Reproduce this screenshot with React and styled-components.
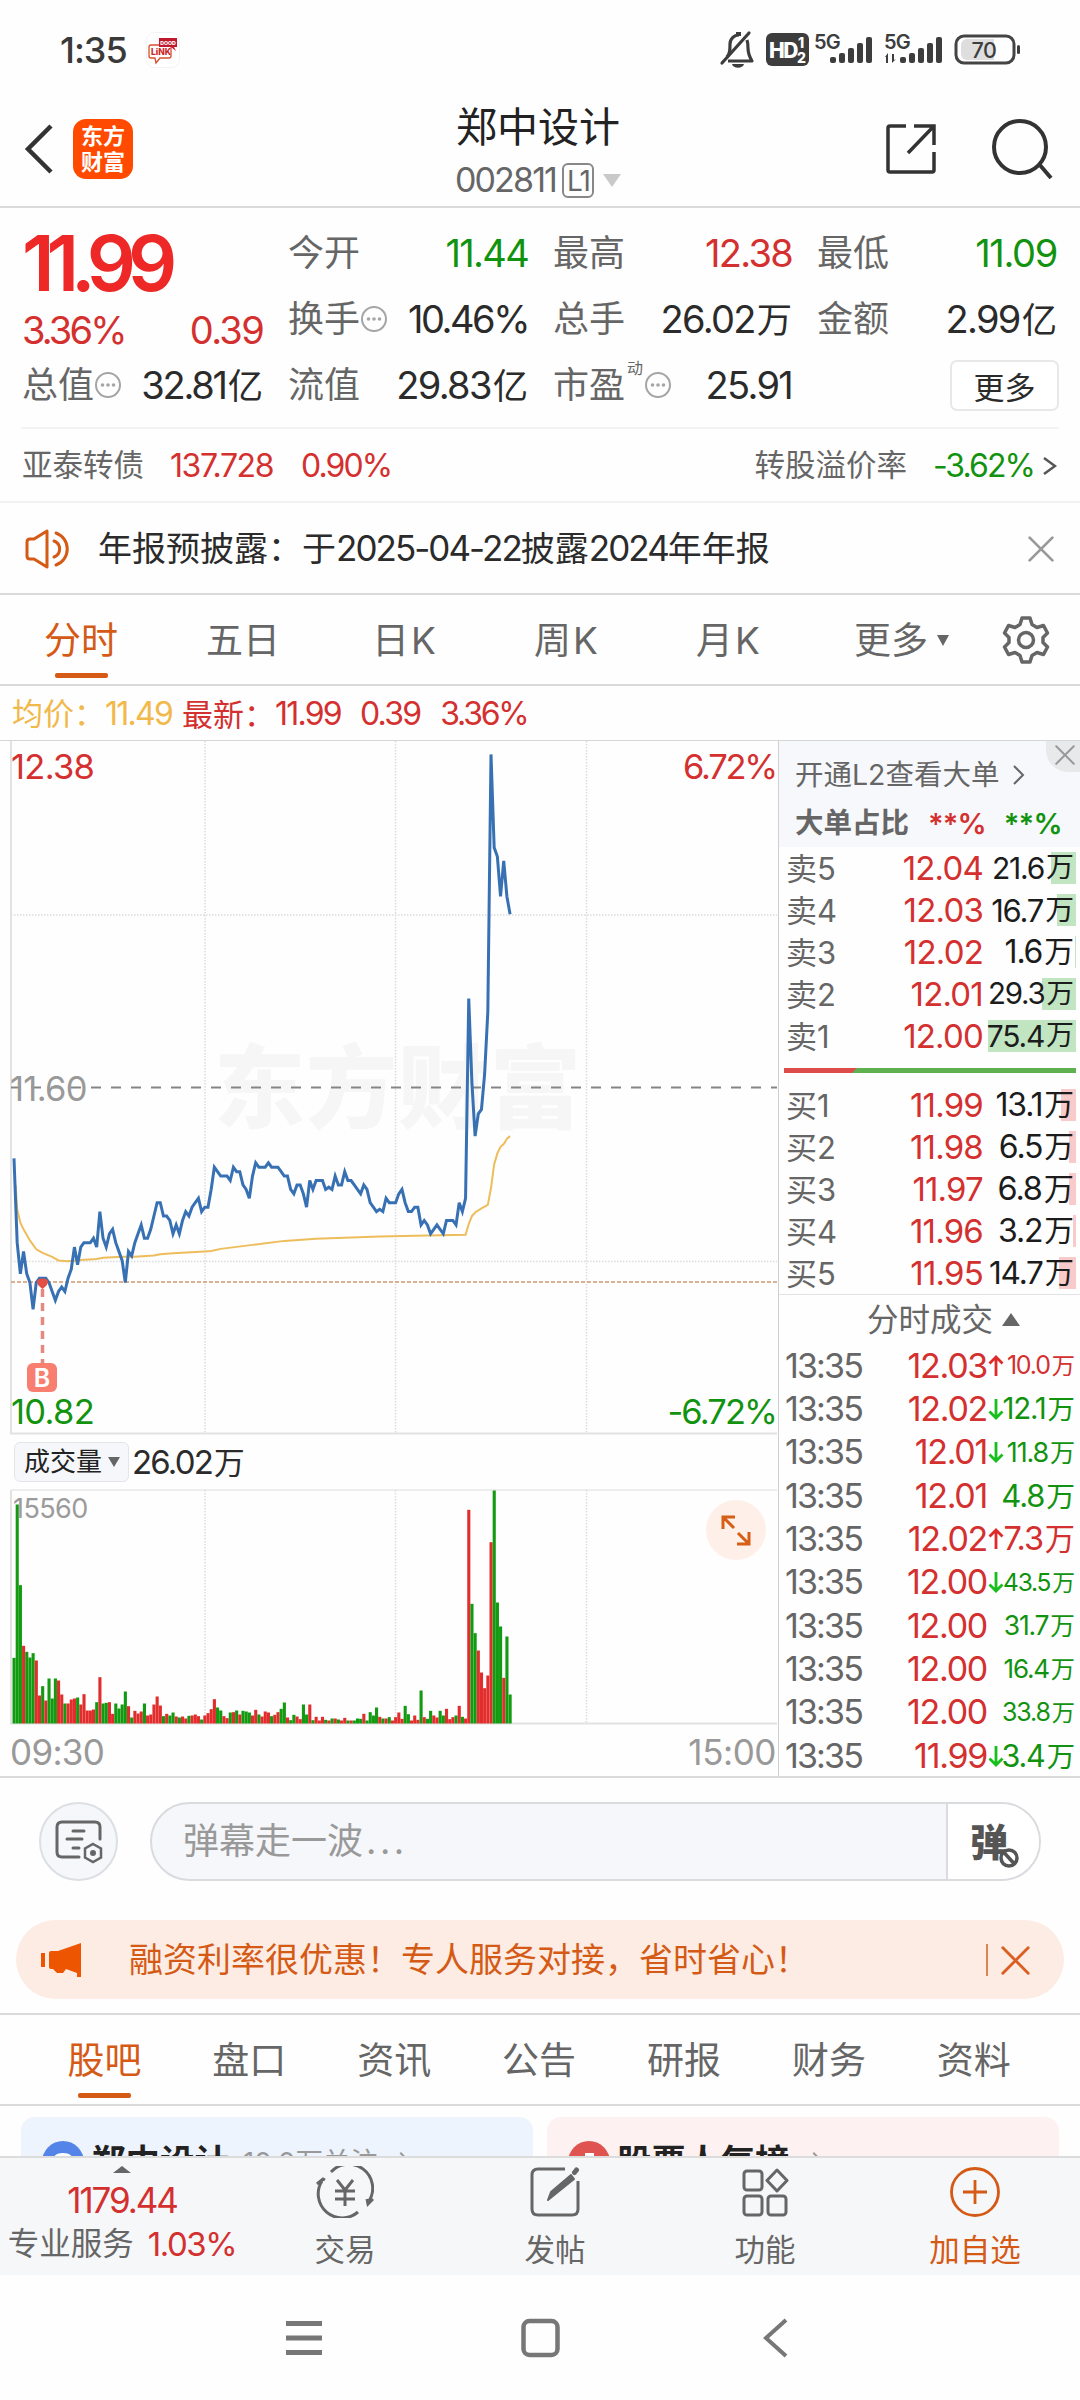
import React from 'react';
import styled, { createGlobalStyle } from 'styled-components';

const RED = '#d3302f';
const GREEN = '#12930f';
const ORANGE = '#d45a15';

const GlobalStyle = createGlobalStyle`
  * { box-sizing: border-box; }
  body {
    margin: 0;
    background: #fff;
  }
`

const Screen = styled.div`
  width: 1080px;
  height: 2400px;
  overflow: hidden;
  display: flex;
  flex-direction: column;
  background: #fefefe;
  color: #666;
  font-family: Inter, 'Noto Sans CJK SC', sans-serif;
  font-size: 36px;
  line-height: 1;
  white-space: nowrap;

  svg { display: block; flex: none; }
`

const Num = styled.span`
  color: ${p => p.$color || '#2b2b2b'};
  font-size: ${p => p.$size || 38}px;
  letter-spacing: ${p => p.$ls || -0.045}em;
  margin-left: ${p => p.$ml || 0}px;
`

const Wan = styled.span`
  font-size: 0.93em;
  letter-spacing: 0;
  margin-left: 2px;
`

/* ---------- status bar ---------- */

const StatusBar = styled.div`
  height: 100px;
  display: flex;
  align-items: center;
  padding: 0 58px 0 60px;
  color: #3a3a3a;
`

const Clock = styled.span`
  width: 86px;
  font-size: 36px;
  font-weight: 500;
  letter-spacing: -1px;
`

const StatusIcons = styled.div`
  margin-left: auto;
`

/* ---------- title bar ---------- */

const TitleBar = styled.div`
  height: 108px;
  display: flex;
  align-items: center;
  justify-content: space-between;
  border-bottom: 2px solid #dadada;
  padding: 0 27px 10px 23px;
`

const TitleSide = styled.div`
  display: flex;
  align-items: center;
  justify-content: ${p => p.$end ? 'flex-end' : 'flex-start'};
  width: 300px;
  gap: ${p => p.$end ? 54 : 20}px;
  padding-top: 2px;
`

const Logo = styled.div`
  width: 60px;
  height: 60px;
  border-radius: 13px;
  background: #ff4a00;
  color: #fff;
  font-size: 22px;
  font-weight: 700;
  line-height: 26px;
  text-align: center;
  padding-top: 4px;
`

const TitleText = styled.div`
  display: flex;
  flex-direction: column;
  align-items: center;
  gap: 12px;
  padding: 6px 0 0 0;
`

const StockName = styled.div`
  font-size: 41px;
  color: #222;
  height: 46px;
  line-height: 46px;
`

const StockCode = styled.div`
  display: flex;
  align-items: center;
  height: 36px;
`

const Level = styled.span`
  width: 32px;
  height: 35px;
  border: 2px solid #888;
  border-radius: 6px;
  margin: 0 9px 0 6px;
  font-size: 28px;
  line-height: 32px;
  letter-spacing: -2px;
  text-align: center;
`

const Triangle = styled.i`
  border: ${p => p.$w / 2}px solid transparent;
  border-${p => p.$up ? 'bottom' : 'top'}: ${p => p.$h}px solid ${p => p.$color || '#666'};
  border-${p => p.$up ? 'top' : 'bottom'}: 0;
`

/* ---------- quote ---------- */

const Quote = styled.div`
  height: 221px;
  margin: 0 21px;
  padding: 12px 2px 0 1px;
  display: grid;
  grid-template-columns: 241px 240px 239px 240px;
  column-gap: 25px;
  border-bottom: 2px solid #f3f3f3;
`

const QuoteCol = styled.div`
  display: grid;
  grid-template-rows: ${p => p.$rows || '66px 66px 66px'};
`

const Cell = styled.div`
  display: flex;
  align-items: center;
  justify-content: space-between;
`

const Label = styled.span`
  display: flex;
  align-items: center;
`

const BigPrice = styled.span`
  font-size: 77px;
  font-weight: 600;
  letter-spacing: -8px;
  color: #ee2827;
`

const Sup = styled.sup`
  align-self: flex-start;
  font-size: 16px;
  margin: -7px 1px 0 2px;
`

const MoreButton = styled.button`
  width: 109px;
  height: 51px;
  margin: 0 -2px 0 auto;
  border: 2px solid #e8e8e8;
  border-radius: 7px;
  background: #fff;
  padding: 0;
  color: #2b2b2b;
  font: 31px 'Noto Sans CJK SC', sans-serif;
  line-height: 41px;
`

const BondRow = styled.div`
  height: 74px;
  padding: 1px 23px 0 22px;
  display: flex;
  align-items: center;
  border-bottom: 2px solid #f1f1f1;
  font-size: 30.5px;
`

const Push = styled.span`
  margin-left: auto;
`

const Notice = styled.div`
  height: 92px;
  display: flex;
  align-items: center;
  padding: 1px 26px 0 25px;
  border-bottom: 2px solid #dadada;
  color: #2b2b2b;
  font-size: 34px;
`

const NoticeText = styled.span`
  flex: 1;
  margin-left: 27px;
`

/* ---------- tabs ---------- */

const Tabs = styled.div`
  height: ${p => p.$height}px;
  display: flex;
  padding-left: ${p => p.$pad || 0}px;
  border-bottom: 2px solid #dadada;
`

const Tab = styled.div`
  position: relative;
  width: ${p => p.$width}px;
  padding-top: 2px;
  display: flex;
  justify-content: center;
  align-items: center;
  font-size: 37px;
  letter-spacing: ${p => p.$ls || 0}px;
  color: ${p => p.$active ? ORANGE : '#666'};

  ${p => p.$active && `&::after {
    content: '';
    position: absolute;
    bottom: 6px;
    width: 53px;
    height: 5px;
    border-radius: 2px;
    background: ${ORANGE};
  }`}
`

const TabCaret = styled.span`
  position: absolute;
  right: 23px;
  display: flex;
`

const TabGear = styled.div`
  flex: 1;
  display: flex;
  align-items: center;
  justify-content: center;
`

const Legend = styled.div`
  height: 54px;
  display: flex;
  align-items: center;
  padding: 2px 0 0 12px;
  font-size: 31px;
  color: ${RED};
`

const Avg = styled.span`
  color: #f0b94a;
  width: 170px;
`

/* ---------- charts and order book ---------- */

const Market = styled.div`
  height: 1038px;
  display: flex;
  border-top: 1px solid #d6d6d6;
  border-bottom: 2px solid #dadada;
`

const Charts = styled.div`
  width: 778px;
`

const VolumeBar = styled.div`
  height: 54px;
  display: flex;
  align-items: center;
  padding-left: 14px;
`

const Indicator = styled.div`
  width: 115px;
  height: 40px;
  display: flex;
  align-items: center;
  justify-content: space-between;
  border: 1px solid #e3e5e8;
  border-radius: 6px;
  background: #f6f7fa;
  padding: 0 8px 0 9px;
  margin-right: 3px;
  color: #222;
  font-size: 26px;
`

const Times = styled.div`
  height: 53px;
  display: flex;
  align-items: center;
  justify-content: space-between;
  padding: 1px 2px 0 10px;
`

const Book = styled.div`
  width: 302px;
  border-left: 1px solid #cfcfcf;
`

const BookHead = styled.div`
  position: relative;
  height: 106px;
  background: #f7f8fb;
  padding: 13px 0 0 16px;
  font-size: 28.5px;
`

const BookLine = styled.div`
  height: 42px;
  margin-bottom: 6px;
  display: flex;
  align-items: center;
  font-weight: ${p => p.$bold ? 600 : 400};
`

const CloseCorner = styled.div`
  position: absolute;
  top: 0;
  right: 0;
  width: 34px;
  height: 31px;
  border-bottom-left-radius: 22px;
  background: #e8e9ea;
  display: flex;
  align-items: center;
  justify-content: center;
  padding: 0 0 3px 3px;
`

const Levels = styled.div`
  padding: 0 4px 0 7px;
`

const LevelRow = styled.div`
  height: 42px;
  display: flex;
  align-items: center;
  font-size: 31px;
`

const LevelPrice = styled.span`
  flex: 1;
  text-align: right;
  font-size: 33px;
  letter-spacing: -0.8px;
  color: ${RED};
`

const LevelAmount = styled.span`
  width: 88px;
  height: 32px;
  margin-left: 5px;
  padding-right: 2px;
  display: flex;
  align-items: center;
  justify-content: flex-end;
  font-size: ${p => p.$size}px;
  letter-spacing: -1.2px;
  color: #1c1c1c;
  background: linear-gradient(${p => p.$color}, ${p => p.$color}) right / ${p => p.$fill}px 100% no-repeat;
`

const Ratio = styled.div`
  height: 5px;
  margin: 11px 4px 11px 5px;
  background: linear-gradient(135deg, #dc4c4b 51px, #5fb14f 52px);
`

const TradeTitle = styled.div`
  height: 50px;
  border-top: 1px solid #e3e3e3;
  display: flex;
  align-items: center;
  justify-content: center;
  gap: 9px;
  padding-left: 28px;
  font-size: 31.5px;
`

const TradeRow = styled.div`
  height: 43.35px;
  display: flex;
  align-items: center;
  padding: 0 5px 0 6px;
`

const TradePrice = styled.span`
  flex: 1;
  text-align: right;
  font-size: 34px;
  letter-spacing: -1.3px;
  color: ${RED};
`

const TradeArrow = styled.span`
  width: 18px;
  display: flex;
  justify-content: center;
  margin-right: 1px;
`

const TradeAmount = styled.span`
  width: 69px;
  display: flex;
  justify-content: flex-end;
  align-items: baseline;
  font-size: ${p => p.$size}px;
  letter-spacing: -1.2px;
  color: ${p => p.$up ? RED : GREEN};
`

/* ---------- comment bar and banner ---------- */

const Comment = styled.div`
  display: flex;
  align-items: center;
  padding: 24px 39px 0 39px;
  gap: 32px;
`

const RoundButton = styled.div`
  width: 79px;
  height: 79px;
  border: 2px solid #dcdfe3;
  border-radius: 50%;
  background: #f6f7fa;
  display: flex;
  align-items: center;
  justify-content: center;
`

const CommentBox = styled.div`
  flex: 1;
  height: 79px;
  display: flex;
  border: 2px solid #d9dbdf;
  border-radius: 40px;
  overflow: hidden;
  background: #f6f7fa;
`

const Placeholder = styled.div`
  flex: 1;
  padding-left: 31px;
  line-height: 75px;
  color: #999;
`

const Ellipsis = styled.span`
  letter-spacing: 3.5px;
  margin-left: 3px;
`

const DanmuToggle = styled.div`
  width: 93px;
  border-left: 2px solid #d9dbdf;
  background: #fff;
  display: flex;
  align-items: center;
  padding-left: 22px;
  color: #555;
  font-size: 38px;
  font-weight: 800;

  svg { margin: 32px 0 0 -9px; }
`

const Banner = styled.div`
  height: 79px;
  margin: 39px 16px 14px;
  padding: 1px 34px 0 25px;
  border-radius: 40px;
  background: #fcece3;
  display: flex;
  align-items: center;
  color: ${ORANGE};
  font-size: 34px;
`

const BannerText = styled.span`
  flex: 1;
  margin-left: 46px;
`

const BannerRule = styled.i`
  width: 2px;
  height: 32px;
  margin-right: 13px;
  background: #dc8455;
`

/* ---------- cards ---------- */

const Divider = styled.div`
  height: 2px;
  background: #dadada;
`

const Cards = styled.div`
  height: 50px;
  overflow: hidden;
  display: grid;
  grid-template-columns: 512px 512px;
  gap: 14px;
  padding: 11px 21px 0;
`

const Card = styled.div`
  height: 120px;
  border-radius: 14px 14px 0 0;
  background: ${p => p.$bg};
  display: flex;
  align-items: flex-start;
  padding: 24px 21px;
`

const CardTitle = styled.span`
  margin: 4px 14px 0 7px;
  font-size: 34.5px;
  font-weight: 700;
  color: #222;
`

const CardNote = styled.span`
  margin: 8px 16px 0 0;
  font-size: 27.5px;
  color: #999;
`

const Chevron = styled.i`
  width: 14px;
  height: 14px;
  margin: 14px 0 0 ${p => p.$ml || 0}px;
  border: solid #999;
  border-width: 2px 2px 0 0;
  transform: rotate(45deg);
`

/* ---------- bottom bar ---------- */

const BottomBar = styled.div`
  height: 119px;
  display: flex;
  background: #f6f7f9;
  border-top: 2px solid #dcdcdc;
`

const IndexTicker = styled.div`
  width: 240px;
  display: flex;
  flex-direction: column;
  align-items: center;
  padding: 8px 0 0 4px;
  font-size: 31.5px;
`

const TickerLine = styled.div`
  height: ${p => p.$height}px;
  display: flex;
  align-items: center;
`

const Action = styled.div`
  width: 210px;
  display: flex;
  flex-direction: column;
  align-items: center;
  padding-top: 8px;
  gap: 17px;
  font-size: 30.5px;
  color: ${p => p.$color || '#666'};
`

const SystemNav = styled.div`
  flex: 1;
  display: flex;
  justify-content: center;
  padding: 41px 3px 0 0;
`

/* ---------- data ---------- */

// minute prices, in cents from yesterday's close of 11.60
const PRICES = [
  -16, -35, -42, -37, -42, -44, -50, -44, -43, -43, -43, -44, -46, -48, -46, -45, -46, -43, -41, -36,
  -40, -36, -35, -35, -35, -34, -36, -28, -34, -36, -33, -32, -35, -37, -39, -44, -37, -38, -35, -33,
  -31, -34, -34, -32, -29, -26, -26, -29, -29, -30, -33, -31, -33, -30, -28, -29, -27, -26, -25, -28,
  -27, -27, -23, -18, -19, -20, -20, -20, -21, -18, -19, -19, -22, -23, -25, -20, -17, -18, -18, -18,
  -17, -18, -18, -18, -19, -20, -20, -23, -24, -22, -22, -24, -27, -21, -23, -21, -21, -21, -23, -22.5,
  -23, -20, -22, -22, -19, -21, -21, -22, -23, -24, -22, -23, -26, -27, -28, -27.5, -28, -25, -26, -26,
  -26, -24, -23, -26, -28, -28, -27, -27, -31, -30, -31, -33, -32, -31, -32, -33, -30, -30, -30, -31,
  -26, -28, -25, 20, 1, -11, -6, -5, 3, 17, 75, 54, 52, 43, 51, 43, 39,
]

// [minute, cents]
const AVERAGE = [
  [0.5, -22], [1, -27.5], [2, -30.5], [3, -32], [5, -34.5], [7, -36.5], [9, -37.3], [12, -38.2], [14, -39], [17, -39.2],
  [21, -38.9], [26, -38.7], [28, -38.4], [34, -38.2], [38, -38.2], [44, -37.9], [46, -37.6], [50, -37.4],
  [60, -37], [62, -36.9], [65, -36.4], [75, -35.5], [85, -34.6], [95, -34.1], [115, -33.6], [130, -33.4],
  [142, -33.2], [143, -30.8], [144, -29], [145, -28.2], [147, -27.3], [149, -26.5], [150, -22.7],
  [151, -17.3], [152, -14.9], [153, -13.4], [154, -12.8], [155, -11.6], [156, -11],
]

// bar heights, negative for a falling minute
const VOLUMES = [
  -197, -657, -415, 233, -215, -198, -211, 189, 84, -112, 69, -135, -75, -135, 129, 87, -60, 60, 72, 75,
  -78, 57, 88, 39, 39, 42, -64, 139, -60, -62, 64, 29, -60, -45, -57, -96, 52, -18, 38, 30,
  36, -60, 24, 27, 57, 81, 54, -22, 29, -24, -33, 21, -18, 21, 15, -23, 24, 27, 22, -12,
  24, 31, 43, 73, -48, -39, 22, 16, -33, 34, -39, 27, -38, -36, -33, 24, 41, -27, 21, 36,
  33, -22, 26, 34, -44, -63, 18, -10, -26, 21, 13, -57, -27, 57, -10, 20, 9, 20, -11, 9,
  -15, 15, -12, 9, 17, -9, 9, -9, -15, -14, 29, -9, -34, -24, -48, 20, -15, 15, -19, 9,
  19, 33, 14, -53, -28, 9, 24, 11, -99, 19, -14, -38, 24, 18, -38, -24, 44, 13, 19, -24,
  53, -20, 15, 641, -359, -271, 219, 153, 106, 144, 544, -699, -363, -291, 137, -261, -87,
]

// name, price, amount, depth bar width, font size
const SELLS = [
  ['卖5', '12.04', '21.6', 25, 30],
  ['卖4', '12.03', '16.7', 19, 31],
  ['卖3', '12.02', '1.6', 1, 32],
  ['卖2', '12.01', '29.3', 34, 29.5],
  ['卖1', '12.00', '75.4', 88, 30],
]
const BUYS = [
  ['买1', '11.99', '13.1', 15, 32],
  ['买2', '11.98', '6.5', 7, 32],
  ['买3', '11.97', '6.8', 7, 32.5],
  ['买4', '11.96', '3.2', 3, 32],
  ['买5', '11.95', '14.7', 17, 31.5],
]

// price, arrow, amount, font size, bought
const TRADES = [
  ['12.03', 'up', '10.0', 25, true],
  ['12.02', 'down', '12.1', 29.5],
  ['12.01', 'down', '11.8', 27],
  ['12.01', '', '4.8', 31],
  ['12.02', 'up', '7.3', 32.5, true],
  ['12.00', 'down', '43.5', 24.5],
  ['12.00', '', '31.7', 26.5],
  ['12.00', '', '16.4', 26],
  ['12.00', '', '33.8', 25],
  ['11.99', 'down', '3.4', 30.5],
]

const minuteX = i => 14 + i * 3.18;
const priceY = c => 346.3 - c * 4.4387;

/* ---------- icons ---------- */

const Cross = ({ size, color, width = 3 }) => (
  <svg width={size} height={size} viewBox="0 0 24 24" fill="none" stroke={color} strokeWidth={width} strokeLinecap="round">
    <path d="M1.5 1.5l21 21M22.5 1.5l-21 21" />
  </svg>
)

const Dots = () => (
  <svg width="28" height="28" viewBox="0 0 28 28" fill="#a5a5a5">
    <circle cx="14" cy="14" r="12" fill="none" stroke="#a5a5a5" strokeWidth="2" />
    <circle cx="8.5" cy="14" r="1.8" /><circle cx="14" cy="14" r="1.8" /><circle cx="19.5" cy="14" r="1.8" />
  </svg>
)

const Arrow = ({ dir }) => (
  <svg width="16" height="22" viewBox="0 0 16 22" fill="none" stroke={dir === 'up' ? '#e02a2a' : '#17bf1d'} strokeWidth="2.8">
    <path d={dir === 'up' ? 'M8 21V3M1.5 8.5L8 2l6.5 6.5' : 'M8 1v18M1.5 13.5L8 20l6.5-6.5'} />
  </svg>
)

const StatusGlyphs = () => (
  <svg width="304" height="44" viewBox="718 28 304 44" fill="#3d3d3d" fontFamily="Inter, sans-serif">
    <g fill="none" stroke="#3d3d3d" strokeWidth="3.2" strokeLinejoin="round">
      <path d="M727 57c3-4 3-7 3-13 0-5 4-9 9-9M747 40c1 3 1 5 1 8 0 5 1 8 4 13h-24" />
      <path d="M722 63l27-30" strokeLinecap="round" />
    </g>
    <path d="M732 64h12c-1 5-11 5-12 0zM736 32h5v4h-5z" />
    <rect x="766" y="33" width="43" height="33" rx="6" />
    <text x="769" y="58" fontSize="21" fontWeight="800" fill="#fff" letterSpacing="-1.5">HD</text>
    <text x="798" y="48" fontSize="14" fontWeight="800" fill="#fff">1</text>
    <text x="797" y="63" fontSize="14" fontWeight="800" fill="#fff">2</text>
    {[814, 884].map(x => (
      <text key={x} x={x} y="48.5" fontSize="20" fontWeight="600" letterSpacing="-0.8">5G</text>
    ))}
    {[830, 900].map(x => [57, 53, 48, 43, 37].map((y, i) => (
      <rect key={x + i} x={x + i * 9} y={y} width="6" height={63 - y} rx="2" />
    )))}
    <path d="M885 57l3-4v10h-2v-6zM892 54h2v6l2-1-4 4z" />
    <rect x="956" y="36" width="58" height="27" rx="8" fill="none" stroke="#444" strokeWidth="3" />
    <path d="M967 39h27v21h-27a6 6 0 0 1-6-6v-9a6 6 0 0 1 6-6z" fill="#dedede" />
    <rect x="1017" y="45" width="3" height="9" rx="1.5" />
    <text x="984" y="57.5" fontSize="21.5" fontWeight="500" textAnchor="middle" letterSpacing="-0.5">70</text>
  </svg>
)

const LinkBadge = () => (
  <svg width="34" height="36" viewBox="0 0 34 36" fontFamily="Inter, sans-serif">
    <rect x="0.5" y="0.5" width="33" height="35" rx="8" fill="#fff" stroke="#f3f3f3" />
    <path d="M5 13h18q2 0 2 2v9q0 2-2 2H14l-4 5-1-5H5q-2 0-2-2v-9q0-2 2-2z" fill="#fff" stroke="#d4502f" strokeWidth="1.3" />
    <path d="M13 6h18v9h-3l2 4-5-4H13z" fill="#c0182c" />
    <text x="5" y="23" fontSize="8.5" fontWeight="800" fill="#cc2a2a">LiNK</text>
    <text x="14.2" y="13" fontSize="5.2" fontWeight="800" fill="#fff">DOOD</text>
  </svg>
)

const Gear = () => (
  <svg width="48" height="50" viewBox="0 0 48 50" fill="none" stroke="#666" strokeWidth="3.5" strokeLinejoin="round">
    <path d="M20 3h8l2 6.5 5 3 6.500-2 4 7.500-4.500 4.500v5l4.500 4.500-4 7.500-6.500-2-5 3-2 6.500h-8l-2-6.500-5-3-6.500 2-4-7.500L7 27.500v-5L2.500 18l4-7.500 6.500 2 5-3z" />
    <circle cx="24" cy="25" r="7.5" />
  </svg>
)

const Speaker = () => (
  <svg width="46" height="40" viewBox="0 0 46 40" fill="none" stroke={ORANGE} strokeWidth="3" strokeLinejoin="round">
    <path d="M2 13q0-3 3-3h4L22 2v36L9 30H5q-3 0-3-3z" />
    <path d="M29 12a8.5 8.5 0 0 1 0 16M31 4a17 17 0 0 1 0 32" strokeLinecap="round" />
  </svg>
)

/* ---------- charts ---------- */

const PriceChart = () => (
  <svg width="778" height="694" viewBox="0 0 778 694" fontFamily="Inter, 'Noto Sans CJK SC', sans-serif">
    <text x="214" y="380" fontSize="91" fontWeight="900" letterSpacing="1" fill="#f6f6f6">东方财富</text>
    <g stroke="#dcdcdc" strokeWidth="1.5" strokeDasharray="1.5 1.5">
      <path d="M205 0V692M395.5 0V692M586.5 0V692M11 174H777M11 520.5H777" />
    </g>
    <path d="M11 0V692.5H777" fill="none" stroke="#e2e2e2" strokeWidth="2" />
    <path d="M11 346.5H777" stroke="#858585" strokeWidth="2" strokeDasharray="10 10" />
    <path d="M11 541H777" stroke="#d09a72" strokeWidth="1.5" strokeDasharray="4 2" />
    <polyline fill="none" stroke="#edbd5b" strokeWidth="2" points={AVERAGE.map(([i, c]) => `${minuteX(i)},${priceY(c)}`).join(' ')} />
    <polyline fill="none" stroke="#3871b3" strokeWidth="3" points={PRICES.map((c, i) => `${minuteX(i)},${priceY(c)}`).join(' ')} />
    <path d="M42.5 548V622" stroke="#e48880" strokeWidth="3.5" strokeDasharray="8 6" />
    <path d="M37 541q0-4 5.500-3.500q5.500-.5 5.500 3.500q0 3-5.500 7q-5.500-4-5.500-7z" fill="#e25045" />
    <rect x="27" y="622" width="30" height="29" rx="6" fill="#f87f70" />
    <text x="42" y="645.5" fontSize="25" fontWeight="600" fill="#fff" textAnchor="middle">B</text>
    <g fontSize="34.5" letterSpacing="-0.7">
      <text x="11" y="37.500" fill={RED}>12.38</text>
      <text x="10" y="359.5" fill="#999">11.60</text>
      <text x="11" y="682.5" fill={GREEN}>10.82</text>
      <text x="776" y="37.500" fill={RED} textAnchor="end" letterSpacing="-2.2">6.72%</text>
      <text x="776" y="682.5" fill={GREEN} textAnchor="end" letterSpacing="-1.9">-6.72%</text>
    </g>
  </svg>
)

const VolumeChart = () => (
  <svg width="778" height="236" viewBox="0 0 778 236" fontFamily="Inter, sans-serif">
    <path d="M205 1V234M395.5 1V234M586.5 1V234" stroke="#dcdcdc" strokeWidth="1.5" strokeDasharray="1.5 1.5" />
    <path d="M11 1H777" stroke="#dcdcdc" strokeWidth="1" />
    <path d="M11 1V234.5H777" fill="none" stroke="#e2e2e2" strokeWidth="2" />
    {VOLUMES.map((v, i) => (
      <rect key={i} x={minuteX(i) - 1.5} y={234.5 - Math.abs(v) / 3} width="3.1" height={Math.abs(v) / 3} fill={v < 0 ? '#129a10' : '#e22d2d'} />
    ))}
    <text x="13" y="28.5" fontSize="27" fill="#9b9b9b" letterSpacing="-0.6">15560</text>
    <circle cx="736" cy="41" r="30" fill="#fef0e8" />
    <path d="M734 39l-11-11M723 40V28h12M738 44l11 11M749 43v12h-12" fill="none" stroke="#d65e17" strokeWidth="3" />
  </svg>
)

const LevelItem = ({ row: [name, price, amount, fill, size], color }) => (
  <LevelRow>
    {name}
    <LevelPrice>{price}</LevelPrice>
    <LevelAmount $fill={fill} $color={color} $size={size}>{amount}<Wan>万</Wan></LevelAmount>
  </LevelRow>
)

const OrderBook = () => (
  <Book>
    <BookHead>
      <BookLine>开通L2查看大单
        <svg width="12" height="22" viewBox="0 0 12 22" fill="none" stroke="#666" strokeWidth="2" style={{ marginLeft: 13 }}><path d="M1 2l9 9-9 9" /></svg>
      </BookLine>
      <BookLine $bold>大单占比
        <Num $size={29} $color={RED} $ml={19} $ls={-0.03}>**%</Num>
        <Num $size={29} $color={GREEN} $ml={18} $ls={-0.03}>**%</Num>
      </BookLine>
      <CloseCorner><Cross size={20} color="#999" width={2.4} /></CloseCorner>
    </BookHead>
    <Levels>
      {SELLS.map(row => <LevelItem key={row[0]} row={row} color="#c1e5c1" />)}
    </Levels>
    <Ratio />
    <Levels>
      {BUYS.map(row => <LevelItem key={row[0]} row={row} color="#f8caca" />)}
    </Levels>
    <TradeTitle>分时成交 <Triangle $w={18} $h={13} $up /></TradeTitle>
    {TRADES.map(([price, dir, amount, size, up], index) => (
      <TradeRow key={index}>
        <Num $size={34} $color="#666" $ls={-0.055}>13:35</Num>
        <TradePrice>{price}</TradePrice>
        <TradeArrow>{dir && <Arrow dir={dir} />}</TradeArrow>
        <TradeAmount $size={size} $up={up}>{amount}<Wan>万</Wan></TradeAmount>
      </TradeRow>
    ))}
  </Book>
)

const App = () => {
  return (
    <Screen>
      <GlobalStyle />
      <StatusBar>
        <Clock>1:35</Clock>
        <LinkBadge />
        <StatusIcons><StatusGlyphs /></StatusIcons>
      </StatusBar>

      <TitleBar>
        <TitleSide>
          <svg width="30" height="50" viewBox="0 0 30 50" fill="none" stroke="#333" strokeWidth="4.5"><path d="M28 2L5 25l23 23" /></svg>
          <Logo>东方<br />财富</Logo>
        </TitleSide>
        <TitleText>
          <StockName>郑中设计</StockName>
          <StockCode>
            <Num $size={34} $color="#666" $ls={-0.055}>002811</Num>
            <Level>L1</Level>
            <Triangle $w={19} $h={13} $color="#c9c9c9" />
          </StockCode>
        </TitleText>
        <TitleSide $end>
          <svg width="52" height="52" viewBox="0 0 52 52" fill="none" stroke="#333" strokeWidth="3.5">
            <path d="M21 3H5q-2 0-2 2v42q0 2 2 2h42q2 0 2-2V29M29 3h20v19M49 3L23 30" />
          </svg>
          <svg width="62" height="62" viewBox="0 0 62 62" fill="none" stroke="#333" strokeWidth="4">
            <circle cx="29" cy="29" r="26" /><path d="M48 46l12 14" />
          </svg>
        </TitleSide>
      </TitleBar>

      <Quote>
        <QuoteCol $rows="86px 48px 62px">
          <Cell><BigPrice>11.99</BigPrice></Cell>
          <Cell><Num $color={RED} $ls={-0.075}>3.36%</Num><Num $color={RED}>0.39</Num></Cell>
          <Cell><Label>总值<Dots /></Label><Num $ls={-0.06}>32.81<Wan>亿</Wan></Num></Cell>
        </QuoteCol>
        <QuoteCol>
          <Cell>今开<Num $color={GREEN}>11.44</Num></Cell>
          <Cell><Label>换手<Dots /></Label><Num $ls={-0.065}>10.46%</Num></Cell>
          <Cell>流值<Num>29.83<Wan>亿</Wan></Num></Cell>
        </QuoteCol>
        <QuoteCol>
          <Cell>最高<Num $color={RED}>12.38</Num></Cell>
          <Cell>总手<Num>26.02<Wan>万</Wan></Num></Cell>
          <Cell><Label>市盈<Sup>动</Sup><Dots /></Label><Num>25.91</Num></Cell>
        </QuoteCol>
        <QuoteCol>
          <Cell>最低<Num $color={GREEN} $ls={-0.035}>11.09</Num></Cell>
          <Cell>金额<Num>2.99<Wan>亿</Wan></Num></Cell>
          <Cell><MoreButton>更多</MoreButton></Cell>
        </QuoteCol>
      </Quote>

      <BondRow>
        亚泰转债
        <Num $size={32} $color={RED} $ml={26}>137.728</Num>
        <Num $size={32} $color={RED} $ml={28} $ls={-0.06}>0.90%</Num>
        <Push>转股溢价率</Push>
        <Num $size={32} $color={GREEN} $ml={26} $ls={-0.06}>-3.62%</Num>
        <svg width="14" height="20" viewBox="0 0 14 20" fill="none" stroke="#555" strokeWidth="2.5" style={{ marginLeft: 9 }}><path d="M1 2l11 8-11 8" /></svg>
      </BondRow>

      <Notice>
        <Speaker />
        <NoticeText>年报预披露：于<Num $size={35} $ls={-0.056}>2025-04-22</Num>披露<Num $size={35} $ls={-0.056}>2024</Num>年年报</NoticeText>
        <Cross size={26} color="#999" width={2.5} />
      </Notice>

      <Tabs $height={91}>
        <Tab $width={162} $active>分时</Tab>
        <Tab $width={162}>五日</Tab>
        <Tab $width={162} $ls={2}>日K</Tab>
        <Tab $width={162} $ls={2}>周K</Tab>
        <Tab $width={162} $ls={2}>月K</Tab>
        <Tab $width={162}>更多<TabCaret><Triangle $w={13} $h={11} /></TabCaret></Tab>
        <TabGear><Gear /></TabGear>
      </Tabs>

      <Legend>
        <Avg>均价：<Num $size={32} $color="#f0b94a" $ls={-0.055}>11.49</Num></Avg>
        最新：
        <Num $size={32} $color={RED} $ls={-0.055}>11.99</Num>
        <Num $size={32} $color={RED} $ml={19} $ls={-0.055}>0.39</Num>
        <Num $size={32} $color={RED} $ml={20} $ls={-0.07}>3.36%</Num>
      </Legend>

      <Market>
        <Charts>
          <PriceChart />
          <VolumeBar>
            <Indicator>成交量<Triangle $w={12} $h={10} /></Indicator>
            <Num $size={33} $ls={-0.055}>26.02<Wan>万</Wan></Num>
          </VolumeBar>
          <VolumeChart />
          <Times>
            <Num $size={35} $color="#999" $ls={-0.02}>09:30</Num>
            <Num $size={35} $color="#999" $ls={-0.012}>15:00</Num>
          </Times>
        </Charts>
        <OrderBook />
      </Market>

      <Comment>
        <RoundButton>
          <svg width="50" height="46" viewBox="0 0 50 46" fill="none" stroke="#666" strokeWidth="3" strokeLinecap="round">
            <path d="M25 38H8q-5 0-5-5V8q0-5 5-5h33q5 0 5 5v12M19 12h11M13 20h15M19 29h6" />
            <path d="M39 25l8 4.500v9L39 43l-8-4.500v-9z" strokeWidth="2.5" />
            <circle cx="39" cy="34" r="1.5" />
          </svg>
        </RoundButton>
        <CommentBox>
          <Placeholder>弹幕走一波<Ellipsis>...</Ellipsis></Placeholder>
          <DanmuToggle>
            弹
            <svg width="20" height="20" viewBox="0 0 20 20" fill="#fff" stroke="#555" strokeWidth="3.5">
              <circle cx="10" cy="10" r="8" /><path d="M5 4.5l10 11" />
            </svg>
          </DanmuToggle>
        </CommentBox>
      </Comment>

      <Banner>
        <svg width="42" height="36" viewBox="0 0 42 36" fill="#ed5500">
          <path d="M0 11h4v14H0zM8 11q0-2 2-2h7L40 1v34h-4v-4l-11-4-3 4h-6l-4-4h-2q-2 0-2-2z" />
        </svg>
        <BannerText>融资利率很优惠！专人服务对接，省时省心！</BannerText>
        <BannerRule />
        <Cross size={29} color="#dc5f22" width={2.4} />
      </Banner>

      <Divider />
      <Tabs $height={91} $pad={32}>
        {['股吧', '盘口', '资讯', '公告', '研报', '财务', '资料'].map((name, index) => (
          <Tab key={name} $width={144.9} $active={index === 0}>{name}</Tab>
        ))}
      </Tabs>

      <Cards>
        <Card $bg="#edf4fd">
          <svg width="42" height="42" viewBox="0 0 42 42"><circle cx="21" cy="21" r="21" fill="#5584e8" /><path d="M11 20q0-8 10-8t10 8v6H11z" fill="#fff" /></svg>
          <CardTitle>郑中设计</CardTitle>
          <CardNote>10.0万关注</CardNote>
          <Chevron />
        </Card>
        <Card $bg="#fdf2f1">
          <svg width="42" height="42" viewBox="0 0 42 42"><circle cx="21" cy="21" r="21" fill="#df5450" /><path d="M17 12h9v16h-9z" fill="#fff" /></svg>
          <CardTitle>股票人气榜</CardTitle>
          <Chevron $ml={3} />
        </Card>
      </Cards>

      <BottomBar>
        <IndexTicker>
          <Triangle $w={18} $h={7} $up />
          <TickerLine $height={54}><Num $size={35} $color={RED} $ls={-0.06}>1179.44</Num></TickerLine>
          <TickerLine $height={34}>专业服务<Num $size={33} $color={RED} $ml={14}>1.03%</Num></TickerLine>
        </IndexTicker>
        <Action>
          <svg width="58" height="52" viewBox="0 0 58 52" fill="none" stroke="#666" strokeWidth="3">
            <path d="M15 6a24 24 0 0 1 38 29M42 46A24 24 0 0 1 6 15" />
            <path d="M1 18l6-5 2 1M57 33l-5 5-1-5M21 14l8 10 8-10M29 24v16M19 25h20M19 33h20" />
          </svg>
          交易
        </Action>
        <Action>
          <svg width="50" height="52" viewBox="0 0 50 52" fill="none" stroke="#666" strokeWidth="3">
            <path d="M35 3H8q-6 0-6 6v34q0 6 6 6h34q6 0 6-6V15" />
            <path d="M18 34l3-8L41 9l3 4zM45 5l2-2" fill="#666" strokeWidth="2" strokeLinejoin="round" />
            <path d="M44.500 6.500l2-2.500" strokeWidth="5" strokeLinecap="round" />
          </svg>
          发帖
        </Action>
        <Action>
          <svg width="48" height="52" viewBox="0 0 48 52" fill="none" stroke="#666" strokeWidth="3">
            <rect x="3" y="5" width="18" height="19" rx="3" /><rect x="3" y="30" width="18" height="19" rx="3" />
            <rect x="27" y="30" width="18" height="19" rx="3" /><path d="M36 4l10 10.500L36 25 26 14.500z" strokeLinejoin="round" />
          </svg>
          功能
        </Action>
        <Action $color={ORANGE}>
          <svg width="52" height="52" viewBox="0 0 52 52" fill="none" stroke={ORANGE} strokeWidth="2.8">
            <circle cx="26" cy="26" r="23.5" /><path d="M26 14v24M14 26h24" />
          </svg>
          加自选
        </Action>
      </BottomBar>

      <SystemNav>
        <svg width="510" height="44" viewBox="284 2316 510 44" fill="none" stroke="#777" strokeWidth="5">
          <path d="M286 2323.500h36M286 2338h36M286 2352.500h36" />
          <rect x="523.5" y="2321" width="34" height="34" rx="6" strokeWidth="4.5" />
          <path d="M786 2320l-20 18 20 18" strokeWidth="4" />
        </svg>
      </SystemNav>
    </Screen>
  );
}

export default App;
